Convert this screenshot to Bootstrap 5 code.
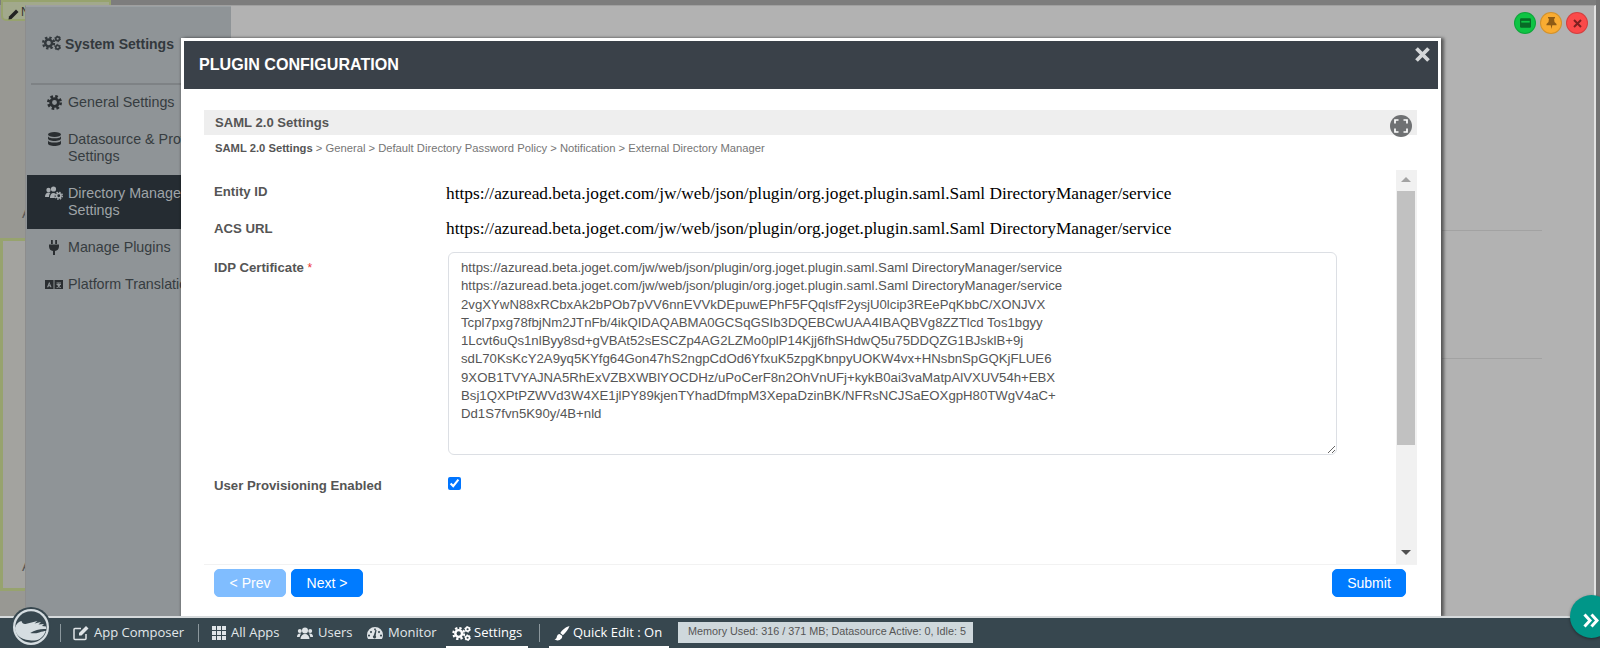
<!DOCTYPE html>
<html lang="en">
<head>
<meta charset="utf-8">
<title>Plugin Configuration</title>
<link rel="stylesheet" href="https://cdn.jsdelivr.net/npm/bootstrap@5.3.0/dist/css/bootstrap.min.css">
<style>
html,body{height:666px;overflow:hidden;background:#fff;font-family:"Liberation Sans",Arial,sans-serif}
.stage{position:relative;height:616px;background:#989893;overflow:hidden}
.bg-top{height:5px;background:#7d7d7d}
.bg-btn{position:absolute;left:1px;top:0;width:110px;height:21px;background:#a2a98c;border:2px solid #97a36e;border-radius:0 0 5px 5px;font-size:12px;color:#333;padding:3px 0 0 5px;display:flex;gap:2px;line-height:14px}
.bg-panel{position:absolute;left:0;top:238px;width:26px;height:353px;background:#a3a39f;border:3px solid #97a36e;border-right:0}
.bg-a{position:absolute;left:22px;font-size:14px;color:#555}
.bg-right{position:absolute;left:1596px;top:0;width:4px;height:100%;background:#747474}
.win{position:absolute;left:25px;top:5px;width:1571px;height:612px;background:#b2b2b2;border-right:2px solid #e2e2e2;border-left:1px solid #8d8d8d;border-top:1px solid #a0a0a0}
.rule{position:absolute;left:1416px;width:100px;height:1px;background:#a2a2a2}
.side{position:absolute;left:0;top:0;width:205px;height:100%;background:#8f9497;border-top:1px solid #9aa0a3}
.side-head{height:78px;margin-left:5px;border-bottom:2px solid #7e8285;padding:28px 0 0 11px;font-weight:700;font-size:14px;color:#33393d;display:flex;gap:4px;align-items:flex-start;line-height:18px}
.side-item{display:flex;font-size:14.3px;line-height:17px;color:#363c40;padding:9px 0 11px 19px;width:205px;white-space:nowrap}
.side-item svg{flex:none;width:18px;height:15px;margin-right:5px;margin-top:1px;color:#2a2e31;fill:#2a2e31}
.side-item.on{background:#252c32;color:#9fa4a8;padding:10px 0 10px 18px;margin:-1px 0 1px 1px;width:204px}
.side-item.on svg{fill:#a8adb1;color:#a8adb1}
.dlg{position:absolute;left:181px;top:38px;width:1260px;height:579px;background:#fff;border:3px solid #fff;box-shadow:3px 0 3px rgba(0,0,0,.5),-1px 0 2px rgba(0,0,0,.2)}
.dlg-head{height:48px;background:#3a4149;color:#fff;font-weight:700;font-size:16.1px;padding:13px 15px;line-height:20px;position:relative}
.dlg-x{position:absolute;right:8px;top:6px;background:none;border:0;padding:0;line-height:0}
.dlg-body{padding:21px 21px 0 20px}
.sec-bar{height:25px;background:#eee;color:#555;font-weight:700;font-size:13.1px;line-height:25px;padding-left:11px;position:relative}
.expand{position:absolute;right:5px;top:5px;width:22px;height:22px;border-radius:50%;background:#6f7173;display:flex;align-items:center;justify-content:center}
.crumbs{font-size:11.22px;color:#757575;padding:6px 0 0 11px;line-height:14px;height:35px}
.crumbs b{color:#555}
.scrollbox{height:394px;position:relative;padding-left:11px}
.fld{display:flex}
.fld-l{width:234px;margin-left:-1px;flex:none;font-weight:700;font-size:13.2px;color:#555;line-height:17px}
.fld-v{font-family:"Liberation Serif","Times New Roman",serif;font-size:17.33px;color:#000;line-height:18px;white-space:nowrap;margin-left:-2px}
.req{color:#e33;font-weight:400;font-size:12px}
.ta{width:889px;height:203px;resize:both;border:1px solid #dcdfe4;border-radius:6px;color:#555;font-family:"Liberation Sans",Arial,sans-serif;font-size:13.2px;line-height:18.3px;padding:6px 12px;overflow:hidden;white-space:pre;display:block}
.chk{width:13px;height:13px;margin:2px 0 0 0;accent-color:#0075ff}
.sb{position:absolute;right:0;top:0;width:21px;height:100%;background:#f1f1f1}
.sb-t{position:absolute;left:1px;top:21px;width:18px;height:254px;background:#c1c1c1}
.sb-up,.sb-dn{position:absolute;left:5px;width:0;height:0;border-left:5px solid transparent;border-right:5px solid transparent}
.sb-up{top:7px;border-bottom:5px solid #a3a3a3}
.sb-dn{bottom:9px;border-top:5px solid #505050}
.foot{border-top:1px solid #f2f2f2;padding:4px 11px 0 10px;display:flex;gap:5px}
.bt{height:28px;padding:0;font-size:14px;line-height:26px;border-radius:5px;width:72px;background:#007bff;border:1px solid #007bff;color:#fff}
.bt.off{background:#80bdff;border-color:#80bdff;opacity:1}
.bt.sub{width:74px;margin-left:auto}
.tbtn{position:absolute;top:6px;width:22px;height:22px;padding:0;border-radius:50%;display:flex;align-items:center;justify-content:center;border:1px solid rgba(0,0,0,.15)}
.teal{position:absolute;left:1570px;top:595px;width:43px;height:43px;border-radius:50%;background:#009688;box-shadow:0 1px 3px rgba(0,0,0,.4);padding:13px 0 0 13px;z-index:3}
.bar{height:32px;background:#37474f;border-top:2px solid #d6dadc;display:flex;align-items:stretch;color:#e2e7ea;font-family:"Open Sans","Noto Sans",sans-serif;font-size:13px;position:relative;white-space:nowrap}
.logo{position:absolute;left:11px;top:-11px;width:40px;height:40px;border-radius:50%;background:#37474f;padding:2px}
.itm{display:flex;align-items:center;gap:5px;height:30px;position:relative}
.itm svg{fill:#dfe4e7;color:#dfe4e7;flex:none}
.itm.act{color:#fff;gap:3px;box-shadow:inset 0 -2px 0 #fff}
.itm.act svg{fill:#fff;color:#fff}
.sep{width:1px;height:18px;background:#8b979d;margin-top:6px}
.mem{position:absolute;left:678px;top:4px;width:295px;height:21px;background:#cfd8dc;color:#555;font-family:"Liberation Sans",Arial,sans-serif;font-size:10.8px;line-height:19px;text-align:center;padding-left:3px}
</style>
</head>
<body>
<svg width="0" height="0" style="position:absolute" aria-hidden="true">
  <symbol id="gear" viewBox="0 0 16 16"><circle cx="8" cy="8" r="4.100" fill="none" stroke="currentColor" stroke-width="3"/><circle cx="8" cy="8" r="6.600" fill="none" stroke="currentColor" stroke-width="2.800" stroke-dasharray="2.800 2.380"/></symbol>
  <symbol id="cogs" viewBox="0 0 20 16"><use href="#gear" x="0" y="1" width="14" height="14"/><circle cx="16.500" cy="3.500" r="2" fill="none" stroke="currentColor" stroke-width="1.700"/><circle cx="16.500" cy="3.500" r="3.100" fill="none" stroke="currentColor" stroke-width="1" stroke-dasharray="1.500 1.750"/><circle cx="16.500" cy="12.500" r="2" fill="none" stroke="currentColor" stroke-width="1.700"/><circle cx="16.500" cy="12.500" r="3.100" fill="none" stroke="currentColor" stroke-width="1" stroke-dasharray="1.500 1.750"/></symbol>
</svg>
<div class="stage">
  <div class="bg-top"></div>
  <div class="bg-btn"><svg width="11" height="11" viewBox="0 0 11 11" class="mt-1"><path fill="#222" d="M8 .5l2.500 2.500L3.500 10 .5 10.500 1 7.500z"/></svg><span>N</span></div>
  <div class="bg-panel"></div>
  <div class="bg-a" style="top:203px">A</div>
  <div class="bg-a" style="top:556px">A</div>
  <div class="bg-right"></div>
  <div class="win">
    <div class="rule" style="top:224px"></div>
    <div class="rule" style="top:352px"></div>
    <div class="side">
      <div class="side-head">
        <svg width="19" height="16" viewBox="0 0 20 16" style="color:#33393d"><use href="#cogs"/></svg>
        <span>System Settings</span>
      </div>
      <div class="side-item"><svg viewBox="0 0 18 15"><use href="#gear" x="2" y="0" width="15" height="15"/></svg><span>General Settings</span></div>
      <div class="side-item"><svg viewBox="0 0 18 15"><ellipse cx="9.500" cy="2.500" rx="6.500" ry="2.500"/><path d="M3 4v2.500C3 8 5.900 9 9.500 9S16 8 16 6.500V4c0 1.500-2.900 2.300-6.500 2.300S3 5.500 3 4zM3 8.300v3.200C3 13 5.900 14 9.500 14s6.500-1 6.500-2.500V8.300c0 1.500-2.900 2.300-6.500 2.300S3 9.800 3 8.300z"/></svg><span>Datasource &amp; Profile<br>Settings</span></div>
      <div class="side-item on"><svg viewBox="0 0 18 15"><circle cx="3.500" cy="4" r="2.200"/><circle cx="8.500" cy="3" r="2.600"/><path d="M0 11c0-3 1.500-4.500 3.500-4.500 1 0 1.500.3 2 .6-1 1-1.500 2.200-1.500 3.900zM5 12c0-3 1-5 3.500-5 1 0 1.500.2 2 .5-1 1.500-1 3-.5 4.500z"/><use href="#gear" x="9.500" y="5.500" width="8.500" height="8.500"/></svg><span>Directory Manager<br>Settings</span></div>
      <div class="side-item"><svg viewBox="0 0 18 15"><path d="M6 0h1.800v4H6zM10.200 0H12v4h-1.800zM4 4.500h10v2c0 2.700-1.800 4.300-4 4.500v4H8v-4C5.800 10.800 4 9.200 4 6.500z"/></svg><span>Manage Plugins</span></div>
      <div class="side-item"><svg viewBox="0 0 18 15"><path fill-rule="evenodd" d="M0 3h8.500v9H0zM9.500 3H18v9H9.500zM4.200 4.800L2 10.200h1.300l.4-1h1.200l.4 1h1.300zM4.200 6.900l.4 1.300h-.8zM11.500 5.500v1h2v.5h-2v1h.8c.3.800.7 1.300 1 1.600-.5.300-1 .5-1.800.6v.8c1-.1 1.700-.4 2.300-.8.600.4 1.300.7 2.200.8v-.8c-.7-.1-1.200-.3-1.700-.6.500-.5.800-1.100 1-1.600h.7V7h-2v-.5h2v-1z"/></svg><span>Platform Translation</span></div>
    </div>
    <button class="tbtn" style="left:1488px;background:#0fc444" aria-label="Minimise"><svg width="11" height="10" viewBox="0 0 13 11"><rect width="13" height="11" rx="1.500" fill="#086b26"/><rect x="1.500" y="3" width="10" height="2" fill="#0fc444"/></svg></button>
    <button class="tbtn" style="left:1514px;background:#f9ac32" aria-label="Pin"><svg width="11" height="12" viewBox="0 0 11 12"><path fill="#8e5b15" d="M2 0h7v1.500H8L8.500 5l2 2v1.300H6.300L5.500 12 4.700 8.300H.5V7l2-2L3 1.500H2z"/></svg></button>
    <button class="tbtn" style="left:1540px;background:#fb4a4a" aria-label="Close"><svg width="9" height="9" viewBox="0 0 9 9"><path stroke="#7f2020" stroke-width="2" d="M1 1l7 7M8 1L1 8"/></svg></button>
  </div>
  <div class="dlg" role="dialog">
    <div class="dlg-head">PLUGIN CONFIGURATION<button class="dlg-x" aria-label="Close"><svg width="15" height="15" viewBox="0 0 15 15"><path stroke="#d5d7d9" stroke-width="3.800" d="M1.500 1.500l12 12M13.500 1.500l-12 12"/></svg></button></div>
    <div class="dlg-body">
      <div class="sec-bar">SAML 2.0 Settings
        <div class="expand"><svg width="14" height="14" viewBox="0 0 14 14" fill="none" stroke="#fff" stroke-width="1.700"><path d="M1 4.500V1h3.500M9.500 1H13v3.500M13 9.500V13H9.500M4.500 13H1V9.500"/></svg></div>
      </div>
      <div class="crumbs"><b>SAML 2.0 Settings</b> &gt; General &gt; Default Directory Password Policy &gt; Notification &gt; External Directory Manager</div>
      <div class="scrollbox">
        <div class="fld" style="padding-top:13px;height:40px"><div class="fld-l">Entity ID</div><div class="fld-v" style="padding-top:2px">https://azuread.beta.joget.com/jw/web/json/plugin/org.joget.plugin.saml.Saml DirectoryManager/service</div></div>
        <div class="fld" style="height:38px;padding-top:10px"><div class="fld-l">ACS URL</div><div class="fld-v">https://azuread.beta.joget.com/jw/web/json/plugin/org.joget.plugin.saml.Saml DirectoryManager/service</div></div>
        <div class="fld" style="height:227px;padding-top:4px"><div class="fld-l" style="padding-top:7px">IDP Certificate <span class="req">*</span></div><textarea class="ta" readonly aria-label="IDP Certificate">https://azuread.beta.joget.com/jw/web/json/plugin/org.joget.plugin.saml.Saml DirectoryManager/service
https://azuread.beta.joget.com/jw/web/json/plugin/org.joget.plugin.saml.Saml DirectoryManager/service
2vgXYwN88xRCbxAk2bPOb7pVV6nnEVVkDEpuwEPhF5FQqlsfF2ysjU0lcip3REePqKbbC/XONJVX
Tcpl7pxg78fbjNm2JTnFb/4ikQIDAQABMA0GCSqGSIb3DQEBCwUAA4IBAQBVg8ZZTlcd Tos1bgyy
1Lcvt6uQs1nlByy8sd+gVBAt52sESCZp4AG2LZMo0plP14Kjj6fhSHdwQ5u75DDQZG1BJsklB+9j
sdL70KsKcY2A9yq5KYfg64Gon47hS2ngpCdOd6YfxuK5zpgKbnpyUOKW4vx+HNsbnSpGQKjFLUE6
9XOB1TVYAJNA5RhExVZBXWBlYOCDHz/uPoCerF8n2OhVnUFj+kykB0ai3vaMatpAlVXUV54h+EBX
Bsj1QXPtPZWVd3W4XE1jlPY89kjenTYhadDfmpM3XepaDzinBK/NFRsNCJSaEOXgpH80TWgV4aC+
Dd1S7fvn5K90y/4B+nld
</textarea></div>
        <div class="fld"><div class="fld-l" style="padding-top:2px">User Provisioning Enabled</div><input class="chk" type="checkbox" checked aria-label="User Provisioning Enabled"></div>
        <div class="sb"><div class="sb-up"></div><div class="sb-t"></div><div class="sb-dn"></div></div>
      </div>
      <div class="foot">
        <button class="bt off" disabled>&lt; Prev</button>
        <button class="bt">Next &gt;</button>
        <button class="bt sub">Submit</button>
      </div>
    </div>
  </div>
</div>
<div class="teal"><svg width="16" height="15" viewBox="0 0 16 15" fill="none" stroke="#fff" stroke-width="3"><path d="M1.500 1.500l5.500 6-5.500 6M8.500 1.500l5.500 6-5.500 6"/></svg></div>
<nav class="bar">
  <div class="logo"><svg viewBox="0 0 36 36" width="36" height="36"><circle cx="18" cy="18" r="18" fill="#d5dde1"/><circle cx="18" cy="18" r="15.700" fill="#37474f"/><path fill="#d5dde1" d="M2 19C3 15 5.500 12.500 8.500 12c.5 2.500 2.500 3.500 5 2.800l11-2.800-3 2.500 6.500-1.500-2.500 2.500 5.500-.5-2 2 4 .5c.2 1 .2 1.500.2 2.500-5-.5-11 .5-16 4 2 .5 6 .5 9-.5 3-1 5-1.500 6.500-1.500-1 3-3 6-6 8-3 1.500-7 2-10 1.300C6 30 2.500 25 2 19z"/></svg></div>
  <div class="sep" style="margin-left:60px"></div>
  <div class="itm" style="margin-left:12px;width:125px"><svg width="16" height="16" viewBox="0 0 16 16"><path fill="none" stroke="#dfe4e7" stroke-width="1.500" d="M13 9v4.500a1 1 0 0 1-1 1H2a1 1 0 0 1-1-1v-9a1 1 0 0 1 1-1h6"/><path d="M6 8l7-7 2.500 2.500-7 7H6z"/></svg><span>App Composer</span></div>
  <div class="sep"></div>
  <div class="itm" style="margin-left:13px;width:85px"><svg width="14" height="14" viewBox="0 0 14 14"><path d="M0 0h4v4H0zM5 0h4v4H5zM10 0h4v4h-4zM0 5h4v4H0zM5 5h4v4H5zM10 5h4v4h-4zM0 10h4v4H0zM5 10h4v4H5zM10 10h4v4h-4z"/></svg><span>All Apps</span></div>
  <div class="itm" style="width:70px"><svg width="16" height="13" viewBox="0 0 16 13"><circle cx="8" cy="3.500" r="3"/><circle cx="2.800" cy="4" r="2"/><circle cx="13.200" cy="4" r="2"/><path d="M3.500 12c0-3 2-5 4.500-5s4.500 2 4.500 5zM0 10c0-2 1-3.500 3-3.500.5 0 .8.100 1 .3C3.300 7.700 2.800 8.800 2.700 10zM16 10c0-2-1-3.500-3-3.500-.5 0-.8.100-1 .3.700.9 1.200 2 1.300 3.200z"/></svg><span>Users</span></div>
  <div class="itm" style="width:79px"><svg width="16" height="14" viewBox="0 0 16 14"><path fill-rule="evenodd" d="M8 1a8 8 0 0 1 8 8c0 1.500-.4 3-1.200 4H1.200C.4 12 0 10.500 0 9a8 8 0 0 1 8-8zM8.500 4l-1.800 5.500a1.600 1.600 0 1 0 2 .3L9.500 4zM4 5a1 1 0 1 0 .01 0zM2 8.500a1 1 0 1 0 .01 0zM12 5a1 1 0 1 0 .01 0zM14 8.500a1 1 0 1 0 .01 0zM8 2.500a.9.900 0 1 0 .01 0z"/></svg><span>Monitor</span></div>
  <div class="itm act" style="padding-left:6px;width:82px"><svg width="19" height="15" viewBox="0 0 20 16"><use href="#cogs"/></svg><span>Settings</span></div>
  <div class="sep" style="margin-left:11px"></div>
  <div class="itm act" style="margin-left:9px;padding-left:5px;width:120px"><svg width="16" height="15" viewBox="0 0 16 15"><path d="M15.500 0C12 1 8 4 6.300 7l2.600 2.300C11.500 7 14.500 3.500 15.500 0zM5.500 8C3 8 3 11 2.500 12 2 13 1 13 .500 13c1.500 2 5 2 7-.500.8-1 1-2.500.3-3z"/></svg><span>Quick Edit : On</span></div>
  <div class="mem">Memory Used: 316 / 371 MB; Datasource Active: 0, Idle: 5</div>
</nav>
</body>
</html>
